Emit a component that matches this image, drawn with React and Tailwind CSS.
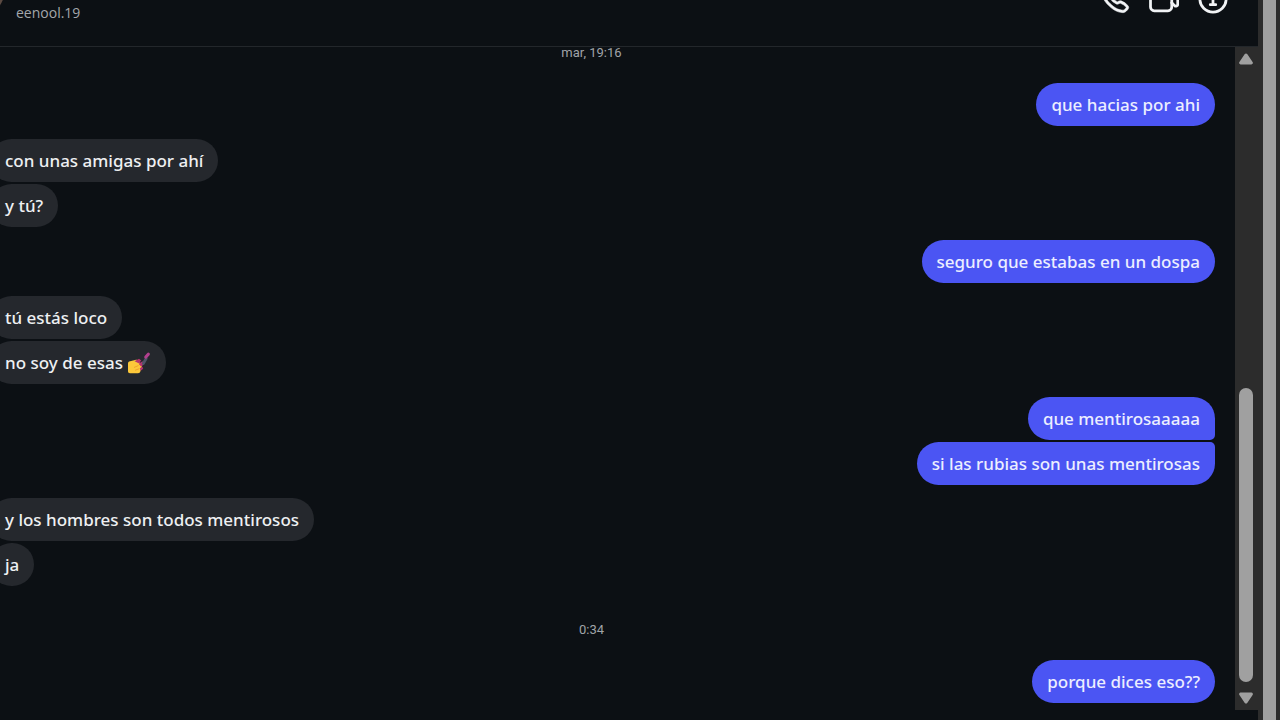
"use client";

const messages = [
  { type: "time", text: "mar, 19:16" },
  { type: "group", mine: true, items: ["que hacias por ahi"] },
  { type: "group", mine: false, items: ["con unas amigas por ahí", "y tú?"] },
  { type: "group", mine: true, items: ["seguro que estabas en un dospa"] },
  { type: "group", mine: false, items: ["tú estás loco", "no soy de esas 💅"] },
  {
    type: "group",
    mine: true,
    joined: true,
    items: ["que mentirosaaaaa", "si las rubias son unas mentirosas"],
  },
  {
    type: "group",
    mine: false,
    items: ["y los hombres son todos mentirosos", "ja"],
  },
  { type: "time", text: "0:34" },
  { type: "group", mine: true, items: ["porque dices eso??"] },
];

function PhoneIcon() {
  return (
    <svg
      viewBox="0 0 24 24"
      className="size-[30px]"
      fill="currentColor"
      stroke="currentColor"
      strokeWidth="0.4"
    >
      <path d="M18.227 22.912c-4.913 0-9.286-3.627-11.486-5.828C4.486 14.83.731 10.291.921 5.231a3.289 3.289 0 0 1 .908-2.138 17.116 17.116 0 0 1 1.865-1.71 2.307 2.307 0 0 1 3.004.174 13.283 13.283 0 0 1 3.658 5.325 2.551 2.551 0 0 1-.19 1.941l-.455.853a.463.463 0 0 0-.024.387 7.57 7.57 0 0 0 4.077 4.075.455.455 0 0 0 .386-.024l.853-.455a2.548 2.548 0 0 1 1.94-.19 13.278 13.278 0 0 1 5.326 3.658 2.309 2.309 0 0 1 .174 3.003 17.319 17.319 0 0 1-1.71 1.866 3.29 3.29 0 0 1-2.138.91 10.27 10.27 0 0 1-.368.006Zm-13.144-20a.27.27 0 0 0-.167.054A15.121 15.121 0 0 0 3.28 4.47a1.289 1.289 0 0 0-.36.836c-.161 4.301 3.21 8.34 5.235 10.364s6.06 5.403 10.366 5.236a1.284 1.284 0 0 0 .835-.36 15.217 15.217 0 0 0 1.504-1.637.324.324 0 0 0-.047-.41 11.62 11.62 0 0 0-4.457-3.119.545.545 0 0 0-.411.044l-.854.455a2.452 2.452 0 0 1-2.071.116 9.571 9.571 0 0 1-5.189-5.188 2.457 2.457 0 0 1 .115-2.071l.456-.855a.544.544 0 0 0 .043-.41 11.629 11.629 0 0 0-3.118-4.458.36.36 0 0 0-.244-.1Z" />
    </svg>
  );
}

function VideoIcon() {
  return (
    <svg
      viewBox="0 0 24 24"
      className="size-[30px]"
      fill="none"
      stroke="currentColor"
      strokeWidth="2.2"
      strokeLinecap="round"
      strokeLinejoin="round"
    >
      <rect x="1.2" y="3" width="17" height="18.4" rx="3" />
      <path d="m18.200 9.146 2.495-2.256A1.500 1.500 0 0 1 23 8.003v8.194a1.500 1.500 0 0 1-2.506 1.113L18.200 15.054" />
    </svg>
  );
}

function InfoIcon() {
  return (
    <svg
      viewBox="0 0 24 24"
      className="size-[30px]"
      fill="none"
      stroke="currentColor"
      strokeWidth="2.2"
      strokeLinecap="round"
      strokeLinejoin="round"
    >
      <circle cx="12" cy="12" r="10.5" />
      <path d="M10.500 10.600H12v5.900M9.800 16.500h4.400" />
      <circle cx="11.8" cy="7.2" r="1.1" fill="currentColor" stroke="none" />
    </svg>
  );
}

function NailPolish() {
  return (
    <svg
      viewBox="0 0 24 24"
      role="img"
      aria-label="💅"
      className="inline-block size-6 align-[-6px]"
    >
      <path
        d="M1 12.500c0-1.300.7-2 2-2.300l6-1.400c1.500-.4 2.600.5 2 1.800l3 1.800c1.300.8 1.400 2.300.7 3.500L13.500 20c-.4 1.500-1.200 2.200-2.500 2.200H3c-1.300 0-2-.8-2-2z"
        fill="#fcc83a"
      />
      <path d="M7 16.500l4.500-2M8 19.300l4-1.500" stroke="#f0a22e" strokeWidth="1" />
      <path
        d="M7.500 10.200l4.500-2.400 2.300 1.600-2.600 2.800zM11.700 12.700l3.800-2.400 1.700 2.400-3 3zM12.700 17.300l2.700-1.600.8 2-2.500 2.100z"
        fill="#b5336f"
      />
      <path
        d="M16.300 12.500 19.200 7.500"
        stroke="#4d5568"
        strokeWidth="2.800"
        strokeLinecap="round"
      />
      <path
        d="M18.800 6 21.300 3.200"
        stroke="#b3408f"
        strokeWidth="3.200"
        strokeLinecap="round"
      />
    </svg>
  );
}

function Header() {
  return (
    <header className="flex h-[47px] shrink-0 items-start border-b border-[#23272b] overflow-hidden">
      <div className="-ml-[53px] -mt-10 size-[58px] shrink-0 rounded-full bg-[#5b4a42]" />
      <a
        href="#profile"
        className="ml-[11px] mt-[3px] text-sm leading-5 text-[#a3a7ab]"
      >
        eenool.19
      </a>
      <div className="-mt-4 ml-auto flex gap-[19px] pr-[30px] text-[#f1f3f5]">
        <button type="button" aria-label="Llamada">
          <PhoneIcon />
        </button>
        <button type="button" aria-label="Videollamada">
          <VideoIcon />
        </button>
        <button type="button" aria-label="Información">
          <InfoIcon />
        </button>
      </div>
    </header>
  );
}

function Bubble({ text, mine, shape }) {
  const hasPolish = text.endsWith("💅");
  return (
    <p
      className={`h-[43px] whitespace-nowrap px-[15px] font-['Noto_Sans','Open_Sans',sans-serif] text-[17px] font-medium leading-[43px] ${shape} ${
        mine ? "bg-[#4b55f3] text-[#eceeff]" : "bg-[#25282d] text-[#eef0f2]"
      }`}
    >
      {hasPolish ? text.replace("💅", "") : text}
      {hasPolish && <NailPolish />}
    </p>
  );
}

function MessageGroup({ mine, joined, items }) {
  return (
    <div
      className={`flex flex-col gap-0.5 ${mine ? "items-end" : "items-start"}`}
    >
      {items.map((text, i) => {
        let shape = "rounded-[22px]";
        if (joined) {
          shape += i === 0 ? " rounded-br-[5px]" : " rounded-tr-[5px]";
        }
        return <Bubble key={text} text={text} mine={mine} shape={shape} />;
      })}
    </div>
  );
}

function Scrollbar() {
  return (
    <div className="flex w-[23px] shrink-0 flex-col items-center bg-[#2c2c2c] py-[6px] pr-px">
      <svg viewBox="0 0 16 12" className="h-3 w-4 shrink-0" fill="#a0a0a0">
        <path d="M6.600 1.300a1.800 1.800 0 0 1 2.800 0l5.200 7.700a1.500 1.500 0 0 1-1.200 2.400H2.600A1.500 1.500 0 0 1 1.400 9z" />
      </svg>
      <div className="mb-2.5 mt-2 flex min-h-0 w-full flex-1 flex-col items-center">
        <div className="flex-[315]" />
        <div className="w-3.5 flex-[294] rounded-full bg-[#a0a0a0]" />
      </div>
      <svg viewBox="0 0 16 12" className="h-3 w-4 shrink-0" fill="#a0a0a0">
        <path d="M6.600 10.700a1.800 1.800 0 0 0 2.800 0L14.600 3a1.500 1.500 0 0 0-1.200-2.400H2.600A1.500 1.500 0 0 0 1.400 3z" />
      </svg>
    </div>
  );
}

export default function App() {
  return (
    <div className="flex h-screen overflow-hidden bg-[#2c2c2c] font-['Open_Sans','Noto_Sans',sans-serif]">
      <div className="flex min-w-0 flex-1 flex-col bg-[#0c1014]">
        <Header />
        <div className="mb-2.5 flex min-h-0 flex-1">
          <main className="-ml-2.5 flex min-w-0 flex-1 flex-col gap-[13px] pr-5">
            {messages.map((m, i) =>
              m.type === "time" ? (
                <time
                  key={i}
                  className={`pb-[11px] pr-[22px] text-center font-[Roboto,sans-serif] text-[13px] leading-3 text-[#a0a4a8] ${
                    i === 0 ? "" : "pt-[25px]"
                  }`}
                >
                  {m.text}
                </time>
              ) : (
                <MessageGroup key={i} {...m} />
              )
            )}
          </main>
          <Scrollbar />
        </div>
      </div>
      {/* Outer page scrollbar */}
      <div className="ml-[5px] mr-1 w-[13px] shrink-0 bg-[#a0a0a0]" />
    </div>
  );
}
